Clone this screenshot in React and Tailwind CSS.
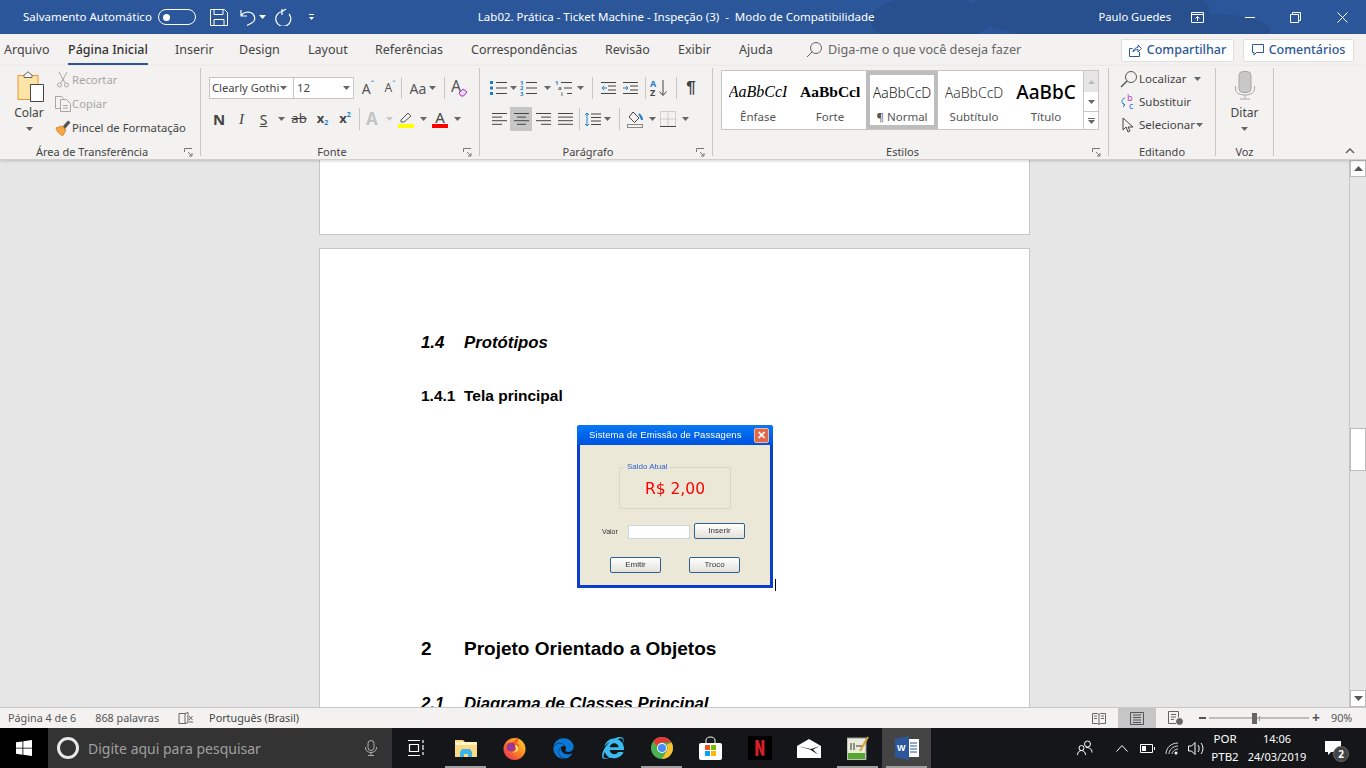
import React from "react";
import { FaEdge, FaInternetExplorer } from "react-icons/fa";

const Caret = ({ className = "" }) => (
  <svg width="7" height="4" viewBox="0 0 7 4" className={`shrink-0 ${className}`}>
    <path d="M0 0h7L3.5 4z" fill="#666" />
  </svg>
);

const Cell = ({ w, className = "", children }) => (
  <div className={`flex items-center justify-center shrink-0 h-full ${w} ${className}`}>{children}</div>
);

const Sep = () => <div className="w-px h-[22px] bg-[#c8c6c4] shrink-0" />;

const Expander = () => (
  <svg width="9" height="9" viewBox="0 0 9 9" fill="none" stroke="#777">
    <path d="M.5 4V.5H8M4 4l4 4M8 5v3H5" />
  </svg>
);

const Group = ({ w, label, expander, children }) => (
  <>
    <div className={`flex flex-col shrink-0 h-full ${w}`}>
      <div className="flex-1 min-h-0">{children}</div>
      <div className="flex items-center h-[13px] text-[11px] text-[#444]">
        <div className="flex-1 text-center">{label}</div>
        {expander ? (
          <div className="w-[16px] flex justify-start">
            <Expander />
          </div>
        ) : null}
      </div>
    </div>
    <div className="w-px h-[88px] mt-[2px] bg-[#c8c6c4] shrink-0" />
  </>
);

const Lines = ({ kind = "left" }) => {
  const rows = {
    left: [[0, 15], [0, 10], [0, 15], [0, 10]],
    center: [[0, 15], [3, 12], [0, 15], [3, 12]],
    right: [[0, 15], [5, 15], [0, 15], [5, 15]],
    justify: [[0, 15], [0, 15], [0, 15], [0, 15]],
  }[kind];
  return (
    <svg width="15" height="14" viewBox="0 0 15 14" stroke="#444">
      {rows.map((r, i) => (
        <path key={i} d={`M${r[0]} ${1.5 + i * 3.6}H${r[1]}`} />
      ))}
    </svg>
  );
};

const ListIcon = ({ kind }) => (
  <svg width="18" height="16" viewBox="0 0 18 16" className="overflow-visible">
    {[2.5, 8, 13.5].map((y, i) => (
      <g key={y}>
        {kind === "bullet" ? <rect x="0" y={y - 1.5} width="3" height="3" fill="#1e7fc9" /> : null}
        {kind === "num" ? <text x="0" y={y + 2} fontSize="6" fontWeight="700" fill="#1e7fc9">{i + 1}</text> : null}
        {kind === "multi" ? <text x={i * 3} y={y + 2} fontSize="6" fontWeight="700" fill={i === 0 ? "#1e7fc9" : "#666"}>{["1", "a", "i"][i]}</text> : null}
        <path d={`M${kind === "multi" ? 6 + i * 3 : 6} ${y}H17`} stroke="#444" />
      </g>
    ))}
  </svg>
);

const Indent = ({ flip }) => (
  <svg width="15" height="14" viewBox="0 0 15 14" fill="none" stroke="#444">
    <path d="M0 1.5H15M7 5H15M7 9H15M0 12.5H15" />
    <path d={flip ? "M0 7H5M3 5l2 2-2 2" : "M1 7H6M3 5L1 7l2 2"} stroke="#1e7fc9" />
  </svg>
);

const Clipboard = () => (
  <svg width="28" height="31" viewBox="0 0 28 31" fill="none">
    <path d="M1 4.500h20v24H1z" fill="#fce3a6" stroke="#e8963a" />
    <path d="M7 4.500c0-1.500 2-1.500 2-1.500s.5-2 2-2 2 2 2 2 2 0 2 1.500v2H7z" fill="#f3f2f1" stroke="#666" />
    <path d="M13.500 13.500h13v17h-13z" fill="#fff" stroke="#444" />
  </svg>
);

const Scissors = () => (
  <svg width="12" height="16" viewBox="0 0 12 16" fill="none" stroke="#a6a6a6">
    <path d="M2 0l6 11M10 0L4 11" />
    <circle cx="2.500" cy="13" r="2" />
    <circle cx="9.500" cy="13" r="2" />
  </svg>
);

const CopyIcon = () => (
  <svg width="16" height="16" viewBox="0 0 16 16" fill="none" stroke="#a6a6a6">
    <path d="M5 12.500H.5V.5h6l2 2" />
    <path d="M5.500 3.500h6l4 4v8h-10zM8 9.500h5M8 12h5" />
  </svg>
);

const Brush = () => (
  <svg width="16" height="16" viewBox="0 0 16 16">
    <path d="M1 8l6-2 4 4-3 5.500C5 15 2 12 1 8z" fill="#f6a74a" stroke="#d47b1f" strokeWidth=".8" />
    <path d="M8 6l5-5.500 2.500 2L10 9z" fill="#555" />
  </svg>
);

function Clip() {
  return (
    <div className="flex h-full">
      <div className="flex flex-col items-center w-[50px] ml-[4px] pt-[5px] shrink-0">
        <div className="ml-[3px]"><Clipboard /></div>
        <span className="text-[12px] text-[#444] leading-[15px] mt-[3px]">Colar</span>
        <Caret className="mt-[7px]" />
      </div>
      <div className="flex flex-col pt-[2px] text-[11.3px] leading-[24px]">
        {[
          [<Scissors key="a" />, "Recortar", "text-[#a6a6a6]"],
          [<CopyIcon key="b" />, "Copiar", "text-[#a6a6a6]"],
          [<Brush key="c" />, "Pincel de Formatação", "text-[#444]"],
        ].map(([ic, t, c]) => (
          <div key={t} className="flex items-center h-[24px]">
            <div className="w-[18px] flex justify-center">{ic}</div>
            <span className={c}>{t}</span>
          </div>
        ))}
      </div>
    </div>
  );
}

function Fonte() {
  return (
    <div className="pl-[8px] pt-[11px]">
      <div className="flex items-center h-[22px]">
        <div className="flex items-center justify-between w-[85px] h-[22px] bg-white border border-[#c6c6c6] pl-[2px] pr-[6px] text-[11.2px] text-[#444]">
          <span className="whitespace-nowrap">Clearly Gothi</span>
          <Caret />
        </div>
        <div className="flex items-center justify-between w-[60px] h-[22px] bg-white border border-l-0 border-[#c6c6c6] pl-[3px] pr-[3px] text-[11.5px] text-[#444]">
          <span>12</span>
          <Caret />
        </div>
        <Cell w="w-[22px]" className="ml-[3px] text-[14px] text-[#555]">A<span className="text-[8px] text-[#1e7fc9] -mt-[7px]">ˆ</span></Cell>
        <Cell w="w-[22px]" className="text-[12px] text-[#555]">A<span className="text-[8px] text-[#1e7fc9] -mt-[6px]">ˇ</span></Cell>
        <Sep />
        <Cell w="w-[42px]" className="text-[14px] text-[#555] gap-[3px]">Aa<Caret /></Cell>
        <Sep />
        <Cell w="w-[30px]">
          <svg width="18" height="18" viewBox="0 0 18 18" fill="none" className="overflow-visible">
            <text x="0" y="13" fontSize="16" fill="#555">A</text>
            <path d="M8 14l4-4 4 3-3.500 4H10z" fill="#e9d3f0" stroke="#a238b5" />
          </svg>
        </Cell>
      </div>
      <div className="flex items-center h-[24px] mt-[8px] -ml-[1px] text-[#444]">
        <Cell w="w-[22px]" className="text-[15px] font-bold">N</Cell>
        <Cell w="w-[23px]" className="text-[15px] italic font-['Liberation_Serif']">I</Cell>
        <Cell w="w-[21px]" className="text-[14px] underline">S</Cell>
        <Cell w="w-[14px]"><Caret /></Cell>
        <Cell w="w-[22px]" className="text-[13px] line-through">ab</Cell>
        <Cell w="w-[25px]" className="text-[13px] font-bold">x<span className="text-[7px] text-[#1e7fc9] mt-[8px]">2</span></Cell>
        <Cell w="w-[20px]" className="text-[13px] font-bold">x<span className="text-[7px] text-[#1e7fc9] -mt-[8px]">2</span></Cell>
        <div className="ml-[4px]"><Sep /></div>
        <Cell w="w-[24px]" className="text-[17px] font-bold text-[#c4c4c4]">A</Cell>
        <Cell w="w-[10px]"><Caret className="opacity-30" /></Cell>
        <Cell w="w-[24px]">
          <svg width="17" height="17" viewBox="0 0 17 17" fill="none">
            <path d="M3 9l7-7 3 3-7 6H3z" stroke="#555" />
            <rect x="0" y="13" width="16" height="4" fill="#ffff00" />
          </svg>
        </Cell>
        <Cell w="w-[10px]"><Caret /></Cell>
        <Cell w="w-[24px]">
          <div className="flex flex-col items-center leading-[13px] text-[15px]">
            A
            <div className="w-[16px] h-[4px] bg-[#ff0000]" />
          </div>
        </Cell>
        <Cell w="w-[10px]"><Caret /></Cell>
      </div>
    </div>
  );
}

function Paragrafo() {
  return (
    <div className="pl-[10px] pt-[11px]">
      <div className="flex items-center h-[22px]">
        <Cell w="w-[18px]"><ListIcon kind="bullet" /></Cell>
        <Cell w="w-[10px]"><Caret /></Cell>
        <Cell w="w-[22px]"><ListIcon kind="num" /></Cell>
        <Cell w="w-[15px]"><Caret /></Cell>
        <Cell w="w-[18px]"><ListIcon kind="multi" /></Cell>
        <Cell w="w-[14px]"><Caret /></Cell>
        <div className="ml-[5px]"><Sep /></div>
        <Cell w="w-[22px]" className="ml-[4px]"><Indent /></Cell>
        <Cell w="w-[22px]"><Indent flip /></Cell>
        <div className="ml-[4px]"><Sep /></div>
        <Cell w="w-[24px]" className="pl-[2px]">
          <svg width="18" height="18" viewBox="0 0 18 18" fill="none" className="overflow-visible">
            <text x="0" y="8" fontSize="9" fontWeight="700" fill="#1e7fc9">A</text>
            <text x="0" y="17" fontSize="9" fontWeight="700" fill="#444">Z</text>
            <path d="M13 1v15M9.500 12.500L13 16.500l3.500-4" stroke="#444" />
          </svg>
        </Cell>
        <div className="ml-[6px]"><Sep /></div>
        <Cell w="w-[28px]" className="text-[17px] font-bold text-[#444] font-['Liberation_Sans']">¶</Cell>
      </div>
      <div className="flex items-center h-[24px] mt-[8px] -ml-[2px]">
        <Cell w="w-[22px]"><Lines kind="left" /></Cell>
        <Cell w="w-[22px]" className="bg-[#c6c6c6]"><Lines kind="center" /></Cell>
        <Cell w="w-[22px]"><Lines kind="right" /></Cell>
        <Cell w="w-[22px]"><Lines kind="justify" /></Cell>
        <div className="ml-[3px]"><Sep /></div>
        <Cell w="w-[22px]" className="pl-[3px]">
          <svg width="17" height="15" viewBox="0 0 17 15" fill="none">
            <path d="M7 2h10M7 5.500h10M7 9h10M7 12.500h10" stroke="#444" />
            <path d="M3 1v13M1 3l2-2 2 2M1 12l2 2 2-2" stroke="#1e7fc9" />
          </svg>
        </Cell>
        <Cell w="w-[10px]"><Caret /></Cell>
        <div className="ml-[7px]"><Sep /></div>
        <Cell w="w-[30px]">
          <svg width="17" height="17" viewBox="0 0 17 17" fill="none">
            <path d="M6 1l6 6-4.500 4.500L2 6z" stroke="#444" />
            <path d="M12 3c2 2 3 4 3 6" stroke="#1e7fc9" strokeWidth="2" />
            <rect x=".5" y="13.500" width="15" height="3" fill="#f3f2f1" stroke="#888" />
          </svg>
        </Cell>
        <Cell w="w-[4px]"><Caret /></Cell>
        <Cell w="w-[28px]">
          <svg width="16" height="16" viewBox="0 0 16 16" fill="none" stroke="#aaa" strokeDasharray="1 1">
            <path d="M.5.5h15v15H.5zM8 .5v15M.5 8h15" />
            <path d="M0 15.500h16" stroke="#444" strokeDasharray="none" />
          </svg>
        </Cell>
        <Cell w="w-[6px]"><Caret /></Cell>
      </div>
    </div>
  );
}

const styles = [
  ["Ênfase", "AaBbCcI", "font-['Liberation_Serif'] italic text-[16px] text-black", false],
  ["Forte", "AaBbCcl", "font-['Liberation_Serif'] font-bold text-[15.500px] text-black", false],
  ["¶ Normal", "AaBbCcD", "text-[14px] font-light text-[#222]", true],
  ["Subtítulo", "AaBbCcD", "text-[14px] font-light text-[#333]", false],
  ["Título", "AaBbC", "text-[19px] font-medium text-black", false],
];

function Estilos() {
  return (
    <div className="pl-[8px] pt-[4px]">
      <div className="flex w-[378px] h-[60px] bg-white border border-[#c6c6c6]">
        <div className="flex flex-1">
          {styles.map(([name, sample, cls, sel]) => (
            <div
              key={name}
              className={`flex flex-col items-center justify-center shrink-0 w-[72px] h-[58px] overflow-hidden ${sel ? "border-[4px] border-[#bdbdbd]" : ""}`}
            >
              <div className={`h-[33px] flex items-center whitespace-nowrap overflow-hidden max-w-[60px] ${cls}`}>{sample}</div>
              <div className="text-[11.5px] text-[#555] leading-[16px]">{name}</div>
            </div>
          ))}
        </div>
        <div className="flex flex-col w-[15px] border-l border-[#c6c6c6] shrink-0">
          <div className="flex items-center justify-center h-[21px] bg-[#e6e6e6]">
            <svg width="7" height="4" viewBox="0 0 7 4"><path d="M0 4h7L3.500 0z" fill="#bbb" /></svg>
          </div>
          <div className="flex items-center justify-center h-[20px] border-b border-[#c6c6c6]"><Caret /></div>
          <div className="flex flex-col items-center justify-center flex-1">
            <div className="w-[7px] h-px bg-[#666] mb-[1px]" />
            <Caret />
          </div>
        </div>
      </div>
    </div>
  );
}

function Editando() {
  return (
    <div className="flex flex-col pl-[11px] pt-[1px] text-[11.5px] text-[#444]">
      <div className="flex items-center h-[23px]">
        <svg width="18" height="18" viewBox="0 0 18 18" fill="none" stroke="#555">
          <circle cx="11" cy="7" r="5.500" />
          <path d="M7 11l-6 6" strokeWidth="1.500" />
        </svg>
        <span className="ml-[1px] w-[53px]">Localizar</span>
        <Caret className="ml-[2px]" />
      </div>
      <div className="flex items-center h-[23px]">
        <svg width="16" height="16" viewBox="0 0 16 16" fill="none" className="overflow-visible">
          <text x="7" y="7" fontSize="9" fill="#b146c2">b</text>
          <text x="9" y="15" fontSize="9" fill="#1e7fc9">c</text>
          <path d="M5 4C1 5 1 10 5 11M3 9l2 2-2 2" stroke="#1e7fc9" />
        </svg>
        <span className="ml-[3px]">Substituir</span>
      </div>
      <div className="flex items-center h-[23px]">
        <svg width="13" height="16" viewBox="0 0 13 16" className="ml-[2px]" fill="none" stroke="#444">
          <path d="M1 1v12l3-3 2 5 2-1-2-4h5z" />
        </svg>
        <span className="ml-[4px]">Selecionar</span>
        <Caret className="ml-[1px]" />
      </div>
    </div>
  );
}

function Voz() {
  return (
    <div className="flex flex-col items-center pt-[5px]">
      <svg width="20" height="29" viewBox="0 0 20 29" fill="none" stroke="#a6a6a6">
        <rect x="4" y=".5" width="12" height="21" rx="4" fill="#c8c8c8" />
        <path d="M.5 15v3c0 3 3 6 9.500 6s9.500-3 9.500-6v-3M10 24v3M5 28h10" />
      </svg>
      <span className="text-[12px] text-[#444] leading-[15px] mt-[5px]">Ditar</span>
      <Caret className="mt-[7px]" />
    </div>
  );
}

function Ribbon() {
  return (
    <div className="relative z-10 flex h-[94px] bg-[#f3f2f1] border-b border-[#d2d0ce] shadow-[0_1px_3px_rgba(0,0,0,0.18)] shrink-0">
      <Group w="w-[200px]" label="Área de Transferência" expander><Clip /></Group>
      <Group w="w-[278px]" label="Fonte" expander><Fonte /></Group>
      <Group w="w-[232px]" label="Parágrafo" expander><Paragrafo /></Group>
      <Group w="w-[395px]" label="Estilos" expander><Estilos /></Group>
      <Group w="w-[106px]" label="Editando"><Editando /></Group>
      <Group w="w-[57px]" label="Voz"><Voz /></Group>
      <svg width="10" height="6" viewBox="0 0 10 6" fill="none" stroke="#666" strokeWidth="1.500" className="absolute right-[11px] bottom-[5px]">
        <path d="M1 5l4-4 4 4" />
      </svg>
    </div>
  );
}

function TitleBar() {
  return (
    <div className="relative flex items-center h-[34px] bg-[#2b579a] text-white text-[11.5px] shrink-0 overflow-hidden">
      <svg width="460" height="34" viewBox="0 0 460 34" className="absolute left-[860px] top-0" fill="#28508f">
        <ellipse cx="70" cy="20" rx="60" ry="24" />
        <ellipse cx="230" cy="10" rx="120" ry="30" />
        <ellipse cx="350" cy="30" rx="60" ry="16" />
      </svg>
      <div className="relative flex items-center ml-[23px]">
        <span className="whitespace-nowrap">Salvamento Automático</span>
        <div className="flex items-center w-[38px] h-[16px] ml-[6px] border border-white rounded-full pl-[4px]">
          <div className="w-[7px] h-[7px] bg-white rounded-full" />
        </div>
        <svg width="18" height="17" viewBox="0 0 18 17" fill="none" stroke="white" className="ml-[14px]">
          <path d="M.5.5h14l3 3v13H.5zM4 .5v5h9v-5M4 16.500v-6h10v6" />
        </svg>
        <svg width="16" height="17" viewBox="0 0 16 17" fill="none" stroke="white" strokeWidth="1.200" className="ml-[12px]">
          <path d="M1 1v6h6M1.500 6.500C3 3 9 2 12.500 4.500c3 3 3 7 0 9L7 16.500" />
        </svg>
        <svg width="7" height="4" viewBox="0 0 7 4" className="ml-[3px]"><path d="M0 0h7L3.500 4z" fill="white" /></svg>
        <svg width="17" height="18" viewBox="0 0 17 18" fill="none" stroke="white" strokeWidth="1.200" className="ml-[9px]">
          <path d="M7 3.500a7.500 7.500 0 1 0 7 2.500" />
          <path d="M7 1v6M7 3.500L11 1" />
        </svg>
        <div className="flex flex-col items-center ml-[17px] gap-[2px]">
          <div className="w-[5px] h-px bg-white" />
          <svg width="5" height="3" viewBox="0 0 5 3"><path d="M0 0h5L2.500 3z" fill="white" /></svg>
        </div>
      </div>
      <div className="relative ml-[164px] whitespace-pre w-[600px]">Lab02. Prática - Ticket Machine - Inspeção (3)  -  Modo de Compatibilidade</div>
      <div className="absolute right-0 top-0 flex items-center h-[34px]">
        <span className="whitespace-nowrap text-[11.2px]">Paulo Guedes</span>
        <svg width="13" height="11" viewBox="0 0 13 11" fill="none" stroke="white" className="ml-[20px]">
          <path d="M.5.5h12v10H.5zM.5 2.500h12M6.500 9V4.500M4.500 6.500l2-2 2 2" />
        </svg>
        <div className="w-[10px] h-px bg-white ml-[41px]" />
        <svg width="11" height="11" viewBox="0 0 11 11" fill="none" stroke="white" className="ml-[35px]">
          <path d="M.5 2.500h8v8h-8zM2.500 2.500v-2h8v8h-2" />
        </svg>
        <svg width="11" height="11" viewBox="0 0 11 11" fill="none" stroke="white" className="ml-[36px] mr-[18px]">
          <path d="M.5.5l10 10M10.500.5l-10 10" />
        </svg>
      </div>
    </div>
  );
}

const tabs = [
  ["Arquivo", "w-[64px]", ""],
  ["Página Inicial", "w-[107px]", "active"],
  ["Inserir", "w-[64px]", ""],
  ["Design", "w-[69px]", ""],
  ["Layout", "w-[67px]", ""],
  ["Referências", "w-[96px]", ""],
  ["Correspondências", "w-[134px]", ""],
  ["Revisão", "w-[73px]", ""],
  ["Exibir", "w-[61px]", ""],
  ["Ajuda", "w-[69px]", ""],
];

function Tabs() {
  return (
    <div className="flex items-center h-[32px] bg-[#f3f2f1] text-[#444] text-[12.5px] pl-[4px] shrink-0">
      {tabs.map(([t, w, a]) => (
        <div key={t} className={`${w} shrink-0 h-full flex items-center`}>
          <span className={`relative whitespace-nowrap ${a ? "font-medium text-[#333]" : ""}`}>
            {t}
            {a ? <span className="absolute left-0 right-0 -bottom-[6px] h-[2px] bg-[#2b579a]" /> : null}
          </span>
        </div>
      ))}
      <svg width="16" height="16" viewBox="0 0 16 16" fill="none" stroke="#666" className="shrink-0 -ml-[2px]">
        <circle cx="10" cy="6" r="5.500" />
        <path d="M6 10L1 15" />
      </svg>
      <span className="ml-[6px] text-[12.700px] text-[#666] whitespace-nowrap">Diga-me o que você deseja fazer</span>
      <div className="flex-1" />
      <button className="flex items-center justify-center w-[113px] h-[23px] bg-white border border-[#e1dfdd] rounded-[2px] text-[#2b579a] text-[12.5px] font-medium gap-[5px]">
        <svg width="13" height="13" viewBox="0 0 13 13" fill="none" stroke="#2b579a">
          <path d="M10.500 8v4.500H.5V4.500h3M4 8c0-3 3-4.500 5-4.500V1l3.500 3.500L9 8V5.500C7 5.500 5 6 4 8z" />
        </svg>
        Compartilhar
      </button>
      <button className="flex items-center justify-center w-[111px] h-[23px] ml-[9px] mr-[12px] bg-white border border-[#e1dfdd] rounded-[2px] text-[#2b579a] text-[12.5px] font-medium gap-[5px]">
        <svg width="12" height="12" viewBox="0 0 12 12" fill="none" stroke="#2b579a">
          <path d="M.5.5h11v8h-7l-2.500 2.500v-2.500h-1.500z" />
        </svg>
        Comentários
      </button>
    </div>
  );
}

const Btn = ({ children, className = "" }) => (
  <div className={`flex items-center justify-center w-[51px] h-[16px] rounded-[2px] border border-[#2d5f8f] bg-gradient-to-b from-white to-[#e3e2da] text-[8px] text-[#333] shrink-0 ${className}`}>
    {children}
  </div>
);

function Dialogo() {
  return (
    <div className="flex flex-col w-[196px] h-[163px] rounded-t-[3px] bg-[#0b3fcb] font-['Liberation_Sans'] blur-[0.3px]">
      <div className="flex items-center h-[20px] pl-[12px] pr-[4px] rounded-t-[3px] bg-gradient-to-b from-[#0a78f5] to-[#0052e0] shrink-0">
        <span className="flex-1 text-white text-[9.5px] tracking-[0.1px] whitespace-nowrap">Sistema de Emissão de Passagens</span>
        <div className="flex items-center justify-center w-[15px] h-[15px] rounded-[2px] bg-[#e0694a] border border-[#f0b8a5] text-white text-[11px] font-bold">✕</div>
      </div>
      <div className="flex-1 mx-[3px] mb-[3px] mt-0 bg-[#ebe8d8] pt-[22px]">
        <div className="relative flex items-center justify-center w-[112px] h-[42px] ml-[39px] pt-[3px] border border-[#d9d6c4] rounded-[2px] font-['DejaVu_Sans'] text-[15.500px] text-[#ff0000]">
          R$ 2,00
          <span className="absolute -top-[6px] left-[5px] px-[2px] bg-[#ebe8d8] text-[8px] leading-[10px] text-[#2b62d4] font-['Liberation_Sans']">Saldo Atual</span>
        </div>
        <div className="flex items-center mt-[14px] ml-[22px]">
          <span className="w-[26px] text-[7px] text-[#333] pt-[2px]">Valor</span>
          <div className="w-[62px] h-[14px] mt-[2px] bg-white border border-[#c8d4de]" />
          <Btn className="ml-[4px]">Inserir</Btn>
        </div>
        <div className="flex mt-[18px] ml-[30px]">
          <Btn>Emitir</Btn>
          <Btn className="ml-[28px]">Troco</Btn>
        </div>
      </div>
    </div>
  );
}

function Documento() {
  return (
    <div className="flex flex-1 min-h-0 bg-[#e6e6e6]">
      <div className="flex-1 min-w-0 flex flex-col items-center overflow-hidden">
        <div className="w-[711px] h-[75px] bg-white border border-t-0 border-[#c6c6c6] shrink-0" />
        <div className="w-[711px] h-[600px] mt-[13px] bg-white border border-b-0 border-[#c6c6c6] pl-[101px] pt-[84px] shrink-0 font-['Liberation_Sans'] text-black">
          <div className="flex items-center h-[20px] text-[16.800px] font-bold italic">
            <span className="w-[43px]">1.4</span>
            <span>Protótipos</span>
          </div>
          <div className="flex items-center h-[20px] mt-[33px] text-[15.500px] font-bold">
            <span className="w-[43px]">1.4.1</span>
            <span>Tela principal</span>
          </div>
          <div className="flex items-end mt-[19px] ml-[156px]">
            <Dialogo />
            <div className="w-px h-[12px] bg-black ml-[2px] -mb-[3px]" />
          </div>
          <div className="flex items-center h-[24px] mt-[49px] text-[19px] font-bold">
            <span className="w-[43px]">2</span>
            <span>Projeto Orientado a Objetos</span>
          </div>
          <div className="flex items-center h-[20px] mt-[33px] text-[16.800px] font-bold italic">
            <span className="w-[43px]">2.1</span>
            <span>Diagrama de Classes Principal</span>
          </div>
        </div>
      </div>
      <div className="flex flex-col w-[17px] bg-[#e6e6e6] border-l border-[#c6c6c6] shrink-0">
        <div className="flex items-center justify-center h-[17px] bg-white border border-[#bcbcbc]">
          <svg width="9" height="5" viewBox="0 0 9 5"><path d="M0 5h9L4.500 0z" fill="#555" /></svg>
        </div>
        <div className="flex-1 pt-[251px]">
          <div className="h-[43px] bg-white border border-[#bcbcbc]" />
        </div>
        <div className="flex items-center justify-center h-[17px] bg-white border border-[#bcbcbc]">
          <svg width="9" height="5" viewBox="0 0 9 5"><path d="M0 0h9L4.500 5z" fill="#555" /></svg>
        </div>
      </div>
    </div>
  );
}

function StatusBar() {
  return (
    <div className="flex items-center h-[21px] bg-[#f3f2f1] border-t border-[#c6c6c6] text-[10.800px] text-[#555] shrink-0">
      <span className="ml-[8px] whitespace-nowrap">Página 4 de 6</span>
      <span className="ml-[19px] whitespace-nowrap">868 palavras</span>
      <svg width="15" height="13" viewBox="0 0 15 13" fill="none" stroke="#666" className="ml-[19px]">
        <path d="M7 1.500H1v10h6V1.500l3-1v10l-3 1M11 4l3.500 4M14.500 4L11 8M11 10h4" />
      </svg>
      <span className="ml-[16px] whitespace-nowrap text-[#444]">Português (Brasil)</span>
      <div className="flex-1" />
      <div className="flex items-center justify-center w-[38px] h-full">
        <svg width="14" height="13" viewBox="0 0 14 13" fill="none" stroke="#666">
          <path d="M7 2.500v10M.5 1.500h5L7 2.500l1.500-1h5v10h-5L7 12.500l-1.500-1h-5zM2 4h3M2 6.500h3M9 4h3M9 6.500h3" />
        </svg>
      </div>
      <div className="flex items-center justify-center w-[38px] h-full bg-[#c6c6c6]">
        <svg width="14" height="13" viewBox="0 0 14 13" fill="none" stroke="#555">
          <path d="M.5.5h13v12H.5zM3 3h8M3 5.500h8M3 8h8M3 10.500h8" />
        </svg>
      </div>
      <div className="flex items-center justify-center w-[38px] h-full">
        <svg width="15" height="14" viewBox="0 0 15 14" fill="none" stroke="#666">
          <path d="M8 12.500H.5V.5h10v6M3 3.500h5M3 6h5M3 8.500h3" />
          <circle cx="11.500" cy="10.500" r="3" fill="#666" />
        </svg>
      </div>
      <div className="w-[7px] h-[2px] bg-[#555] ml-[5px]" />
      <div className="relative flex items-center w-[100px] h-[2px] bg-[#bdbdbd] ml-[3px]">
        <div className="absolute left-[50px] w-px h-[5px] bg-[#999]" />
        <div className="absolute left-[43px] w-[5px] h-[11px] bg-[#666]" />
      </div>
      <span className="ml-[3px] w-[8px] text-[14px] text-[#555] leading-none font-bold">+</span>
      <span className="ml-[11px] mr-[13px] w-[22px] text-[#555]">90%</span>
    </div>
  );
}

const Chrome = () => (
  <svg width="22" height="22" viewBox="0 0 22 22">
    <circle cx="11" cy="11" r="11" fill="#4caf50" />
    <path d="M11 0a11 11 0 0 1 9.500 5.500H11a5.500 5.500 0 0 0-5.200 3.700L2.300 4.200A11 11 0 0 1 11 0z" fill="#e53935" />
    <path d="M20.500 5.500A11 11 0 0 1 11 22l4.800-8.200A5.500 5.500 0 0 0 15.500 8z" fill="#fbc02d" />
    <circle cx="11" cy="11" r="5" fill="#fff" />
    <circle cx="11" cy="11" r="4" fill="#4a8af4" />
  </svg>
);

const Firefox = () => (
  <svg width="23" height="23" viewBox="0 0 23 23">
    <defs>
      <linearGradient id="fx" x1="1" y1="0" x2="0" y2="1">
        <stop offset="0" stopColor="#ffd83a" />
        <stop offset=".45" stopColor="#ff8a1f" />
        <stop offset="1" stopColor="#e5205b" />
      </linearGradient>
    </defs>
    <circle cx="11.500" cy="12" r="11" fill="url(#fx)" />
    <path d="M14 0c2 3 1 5-1 6 3 1 4 4 2 7-2 2-6 2-8 0 2 0 4-1 4-3-2 0-4 0-4-2 1-3 6-4 7-8z" fill="#ff5a1f" />
    <circle cx="8" cy="10" r="4.500" fill="#8a2fa8" opacity=".85" />
    <path d="M12 8c3 0 4 3 3 5s-4 3-6 2c3 0 4-2 4-3s-1-2-1-4z" fill="#ffe36b" />
  </svg>
);

const Cell49 = ({ bar, active, children }) => (
  <div className={`relative flex items-center justify-center w-[49px] h-full shrink-0 ${active ? "bg-[#444444]" : ""}`}>
    {children}
    {bar ? <div className="absolute bottom-0 left-[4px] right-[4px] h-[2px] bg-[#a0a0a0]" /> : null}
  </div>
);

function Taskbar() {
  return (
    <div className="flex items-center h-[40px] bg-[#14161a] text-white shrink-0">
      <div className="flex items-center justify-center w-[48px] h-full bg-black shrink-0">
        <svg width="16" height="16" viewBox="0 0 16 16" fill="white">
          <path d="M0 2.300l6.500-.9v6.300H0zM7.300 1.300L16 0v7.700H7.300zM0 8.400h6.500v6.300L0 13.700zM7.300 8.400H16V16l-8.700-1.200z" />
        </svg>
      </div>
      <div className="flex items-center w-[344px] h-full bg-[#333333] shrink-0">
        <div className="w-[22px] h-[22px] ml-[9px] rounded-full border-[3px] border-[#e8e8e8]" />
        <span className="ml-[9px] text-[14px] text-[#a0a0a0] whitespace-nowrap">Digite aqui para pesquisar</span>
        <div className="flex-1" />
        <svg width="12" height="16" viewBox="0 0 12 16" fill="none" stroke="#aaa" className="mr-[15px]">
          <rect x="3" y=".5" width="6" height="10" rx="3" />
          <path d="M.5 7v1c0 6 11 6 11 0V7M6 13v3M3 15.500h6" />
        </svg>
      </div>
      <Cell49>
        <svg width="17" height="16" viewBox="0 0 17 16" fill="none" stroke="white">
          <path d="M0 .5h12M0 15.500h12M1.500 4.500h9v7h-9zM15 0v3M15 5v5M15 12v3" strokeWidth="1.200" />
        </svg>
      </Cell49>
      <Cell49 bar>
        <svg width="22" height="20" viewBox="0 0 22 20">
          <path d="M0 2h8l2 2h12v15H0z" fill="#f7dc85" />
          <path d="M0 4h22v3H0z" fill="#fff3c4" />
          <path d="M5 19v-5l2-3h8l2 3v5h-4v-3H9v3z" fill="#3fb4ea" />
        </svg>
      </Cell49>
      <Cell49><Firefox /></Cell49>
      <Cell49><FaEdge className="text-[#0a78d7] text-[21px]" /></Cell49>
      <Cell49><FaInternetExplorer className="text-[#39bdf0] text-[22px]" /></Cell49>
      <Cell49 bar><Chrome /></Cell49>
      <Cell49>
        <svg width="23" height="24" viewBox="0 0 23 24">
          <path d="M7 7V4c0-4 9-4 9 0v3" fill="none" stroke="white" />
          <rect x="0" y="7" width="23" height="17" rx="2" fill="white" />
          <rect x="6" y="9" width="5" height="5" fill="#f25022" />
          <rect x="12" y="9" width="5" height="5" fill="#7fba00" />
          <rect x="6" y="15" width="5" height="5" fill="#00a4ef" />
          <rect x="12" y="15" width="5" height="5" fill="#ffb900" />
        </svg>
      </Cell49>
      <Cell49>
        <svg width="24" height="24" viewBox="0 0 24 24">
          <rect width="24" height="24" fill="#000" />
          <path d="M7.500 4h3l3 9V4h3v16l-3-.5-3-8.500v8.700l-3 .3z" fill="#d81f26" />
        </svg>
      </Cell49>
      <Cell49>
        <svg width="24" height="19" viewBox="0 0 24 19">
          <path d="M0 7L12 0l12 7v12H0z" fill="white" />
          <path d="M0 7l14 3 9-3-7 3.500 5 5-8-5z" fill="#14161a" />
        </svg>
      </Cell49>
      <Cell49 bar>
        <svg width="22" height="24" viewBox="0 0 22 24">
          <rect x="0" y="2" width="19" height="22" fill="#e8ecd8" stroke="#999" />
          <rect x="1" y="17" width="17" height="6" fill="#55a632" />
          <path d="M4 7v7M7 7v7M9 10h6" stroke="#333" />
          <path d="M13 15L21 1" stroke="#d8a23a" strokeWidth="2" />
        </svg>
      </Cell49>
      <Cell49 bar active>
        <svg width="24" height="24" viewBox="0 0 24 24">
          <rect x="8" y="3" width="16" height="18" fill="#fff" />
          <path d="M15 7h7M15 10h7M15 13h7M15 16h7" stroke="#2b579a" />
          <path d="M0 3l14-3v24L0 21z" fill="#2b579a" />
          <text x="2" y="15" fontSize="9" fontWeight="700" fill="white" fontFamily="Liberation Sans">W</text>
        </svg>
      </Cell49>
      <div className="flex-1" />
      <svg width="16" height="16" viewBox="0 0 16 16" fill="none" stroke="white" className="shrink-0">
        <circle cx="10.500" cy="4" r="3" />
        <circle cx="4.500" cy="8" r="2.500" />
        <path d="M.5 15c0-3 2-4.500 4-4.500s4 1.500 4 4.500M9 7.500c3 0 6 1 6 5" />
      </svg>
      <svg width="12" height="7" viewBox="0 0 12 7" fill="none" stroke="white" className="ml-[23px] shrink-0">
        <path d="M.5 6.500l5.500-6 5.500 6" />
      </svg>
      <svg width="15" height="9" viewBox="0 0 15 9" fill="none" stroke="white" className="ml-[12px] shrink-0">
        <path d="M.5.5h12v8H.5zM14.500 3v3" />
        <rect x="2" y="2" width="4" height="5" fill="white" stroke="none" />
      </svg>
      <svg width="14" height="13" viewBox="0 0 14 13" fill="none" stroke="#ddd" className="ml-[10px] shrink-0">
        <path d="M1 12C1 6 6 1 13 1M4 12c0-4 4-8 9-8M7 12c0-2 3-5 6-5" />
        <circle cx="11" cy="11" r="1.500" fill="white" stroke="none" />
      </svg>
      <svg width="16" height="13" viewBox="0 0 16 13" fill="none" stroke="white" className="ml-[9px] shrink-0">
        <path d="M.5 4h3L7 .5v12L3.500 9h-3zM10 3c1.500 2 1.500 5 0 7M13 1c2.500 3 2.500 8 0 11" />
      </svg>
      <div className="flex flex-col items-center w-[40px] ml-[1px] text-[11.5px] leading-[18px] shrink-0">
        <span>POR</span>
        <span>PTB2</span>
      </div>
      <div className="flex flex-col items-center w-[62px] ml-[1px] text-[11px] leading-[18px] shrink-0">
        <span>14:06</span>
        <span>24/03/2019</span>
      </div>
      <div className="relative flex justify-center w-[40px] ml-[5px] mr-[13px] shrink-0">
        <svg width="16" height="14" viewBox="0 0 16 14" fill="white">
          <path d="M0 0h16v11H6l-3 3v-3H0z" />
        </svg>
        <div className="absolute -bottom-[7px] left-[20px] flex items-center justify-center w-[16px] h-[16px] rounded-full bg-[#444] border border-[#666] text-[10px] font-bold">2</div>
      </div>
    </div>
  );
}

export default function App() {
  return (
    <div className="flex flex-col w-[1366px] h-[768px] overflow-hidden font-['Noto_Sans',sans-serif]">
      <TitleBar />
      <Tabs />
      <Ribbon />
      <Documento />
      <StatusBar />
      <Taskbar />
    </div>
  );
}
